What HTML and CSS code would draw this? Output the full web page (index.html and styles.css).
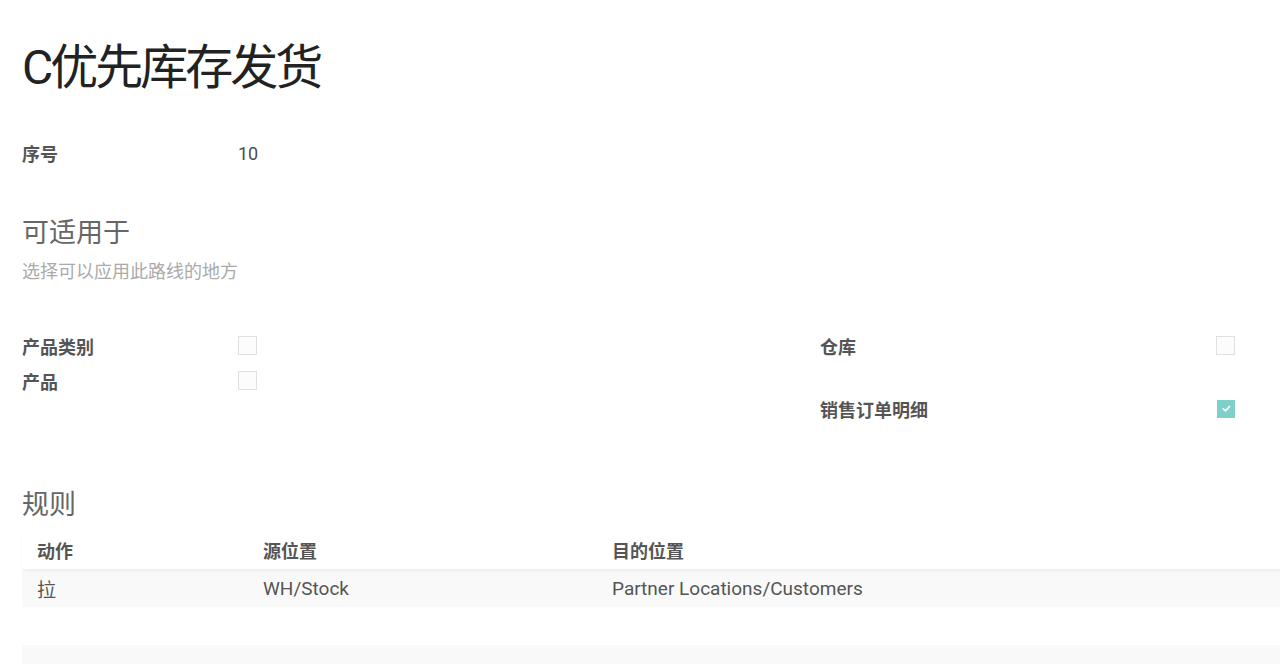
FILE: index.html
```html
<!DOCTYPE html>
<html lang="zh-CN">
<head>
<meta charset="utf-8">
<title>C优先库存发货</title>
<link rel="stylesheet" href="styles.css">
</head>
<body>
<div class="sheet">
  <h1 class="title">C优先库存发货</h1>

  <div class="field-row seq">
    <div class="label">序号</div>
    <div class="value">10</div>
  </div>

  <h2 class="section">可适用于</h2>
  <div class="hint">选择可以应用此路线的地方</div>

  <div class="groups">
    <div class="group">
      <div class="check-row">
        <div class="label">产品类别</div>
        <span class="box"></span>
      </div>
      <div class="check-row">
        <div class="label">产品</div>
        <span class="box"></span>
      </div>
    </div>
    <div class="group right">
      <div class="check-row">
        <div class="label">仓库</div>
        <span class="box"></span>
      </div>
      <div class="check-row tall">
        <div class="label">销售订单明细</div>
        <span class="box checked"><svg viewBox="0 0 18 18" width="18" height="18"><path d="M5.2 9.4 L7.8 11.8 L12.6 6.6" fill="none" stroke="#fff" stroke-width="2" stroke-linecap="round" stroke-linejoin="round"/></svg></span>
      </div>
    </div>
  </div>

  <h2 class="section rules">规则</h2>
  <div class="table">
    <div class="thead">
      <div class="c1">动作</div>
      <div class="c2">源位置</div>
      <div class="c3">目的位置</div>
    </div>
    <div class="tr odd">
      <div class="c1">拉</div>
      <div class="c2">WH/Stock</div>
      <div class="c3">Partner Locations/Customers</div>
    </div>
    <div class="tr even"></div>
    <div class="tr odd"></div>
  </div>
</div>
</body>
</html>
```

FILE: styles.css
```css
html, body {
  margin: 0;
  padding: 0;
  background: #fff;
  overflow: hidden;
}
body {
  font-family: Roboto, "Noto Sans CJK SC", sans-serif;
  color: #4c4c4c;
}
.sheet {
  padding: 36px 0 0 22px;
  width: 1320px;
}
.title {
  margin: 0;
  font-size: 48px;
  font-weight: 400;
  letter-spacing: -3px;
  color: #222;
  line-height: 64px;
}
.field-row {
  display: flex;
  align-items: center;
  height: 30px;
}
.seq {
  margin-top: 38px;
}
.label {
  width: 216px;
  font-size: 18px;
  font-weight: 700;
  color: #555;
}
.value {
  font-size: 18px;
  color: #4c4c4c;
}
.section {
  margin: 0;
  font-size: 27px;
  font-weight: 400;
  color: #666;
  line-height: 36px;
}
.seq + .section {
  margin-top: 47px;
}
.hint {
  margin-top: 9px;
  font-size: 18px;
  color: #aaa;
  line-height: 24px;
}
.groups {
  display: flex;
  margin-top: 44px;
}
.group {
  width: 798px;
}
.group.right {
  width: 415px;
}
.group.right .label {
  width: 397px;
}
.check-row {
  display: flex;
  align-items: center;
  height: 35px;
}
.check-row.tall {
  margin-top: 28px;
}
.box {
  width: 19px;
  height: 19px;
  border: 1px solid #e0e0e0;
  background: #fcfcfc;
  box-sizing: border-box;
  display: inline-flex;
  align-items: center;
  justify-content: center;
}
.box.checked {
  width: 18px;
  height: 18px;
  background: #7fcfcb;
  border-color: #7fcfcb;
}
.box svg {
  width: 15px;
  height: 15px;
}
.rules {
  margin-top: 61px;
}
.table {
  margin-top: 8px;
  width: 1300px;
}
.thead, .tr {
  display: flex;
  align-items: center;
  font-size: 19px;
}
.thead {
  height: 38px;
  font-size: 18px;
  font-weight: 700;
  color: #555;
  position: relative;
  box-shadow: 0 3px 5px -2px rgba(0,0,0,0.08);
  z-index: 1;
}
.tr {
  color: #555;
  height: 38px;
}
.tr.odd {
  background: #f9f9f9;
}
.tr.even {
  background: #fff;
}
.c1 {
  width: 226px;
  padding-left: 15px;
}
.c2 {
  width: 349px;
}
.c3 {
  flex: 1;
}
```
